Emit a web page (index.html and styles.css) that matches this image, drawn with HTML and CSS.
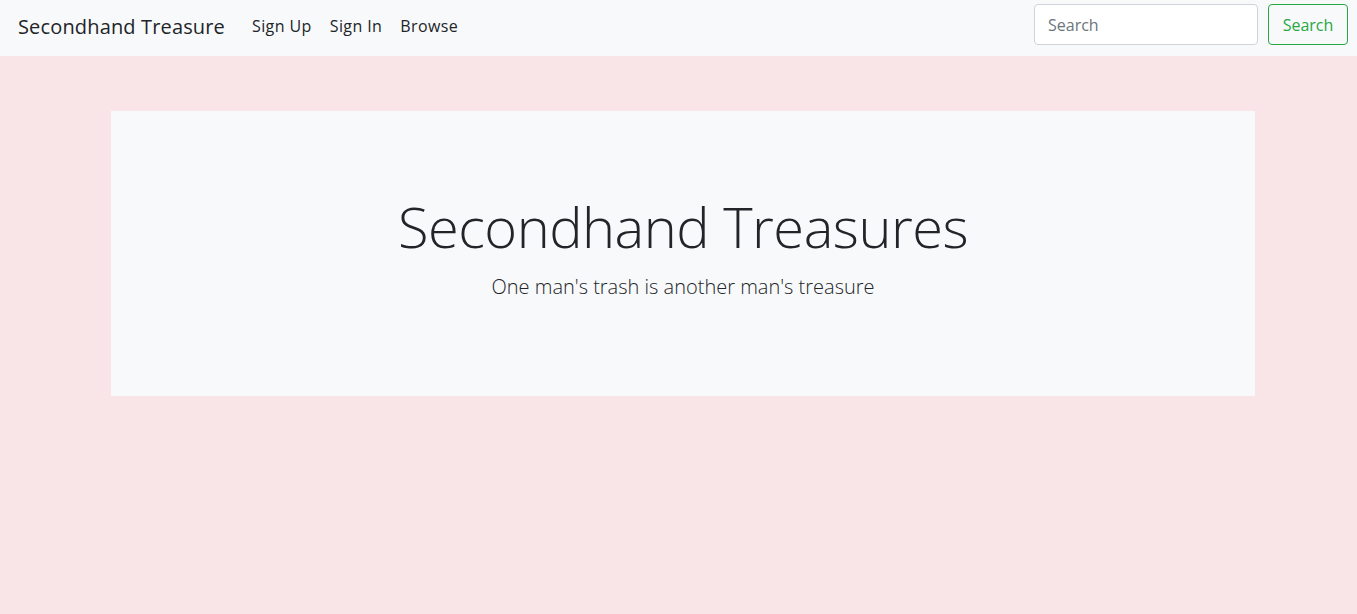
FILE: index.html
```html
<!DOCTYPE html>
<html lang="en">
<head>
<meta charset="utf-8">
<title>Secondhand Treasure</title>
<link rel="stylesheet" href="styles.css">
</head>
<body>
<nav class="navbar">
  <a class="brand" href="#">Secondhand Treasure</a>
  <ul class="nav-links">
    <li><a href="#">Sign Up</a></li>
    <li><a href="#">Sign In</a></li>
    <li><a href="#">Browse</a></li>
  </ul>
  <form class="search-form">
    <input class="search-input" type="search" placeholder="Search">
    <button class="search-btn" type="button">Search</button>
  </form>
</nav>
<main class="page">
  <section class="jumbotron">
    <h1 class="display">Secondhand Treasures</h1>
    <p class="lead">One man's trash is another man's treasure</p>
  </section>
</main>
</body>
</html>
```
FILE: styles.css
```css
* { box-sizing: border-box; }
html, body { margin: 0; height: 100%; }
body {
  font-family: "Open Sans", "Noto Sans", sans-serif;
  color: #212529;
  background: #f9e4e8;
}
.navbar {
  height: 56px;
  background: #f8f9fa;
  display: flex;
  align-items: center;
  padding: 0 9px 0 18px;
}
.brand {
  font-size: 20px;
  color: #212529;
  text-decoration: none;
  margin-right: 27px;
  letter-spacing: 0.15px;
  margin-top: -4px;
}
.nav-links {
  list-style: none;
  margin: -4px 0 0;
  padding: 0;
  display: flex;
  gap: 18px;
  flex: 1;
}
.nav-links a {
  font-size: 16px;
  color: #212529;
  text-decoration: none;
  letter-spacing: 0.4px;
}
.search-form {
  display: flex;
  gap: 10px;
  align-self: flex-start;
  margin-top: 4px;
}
.search-input {
  width: 224px;
  height: 41px;
  border: 1px solid #ced4da;
  border-radius: 4px;
  padding: 0 13px;
  font-family: inherit;
  font-size: 16px;
  color: #495057;
  background: #fff;
}
.search-input::placeholder { color: #6c757d; }
.search-btn {
  height: 41px;
  width: 80px;
  border: 1px solid #28a745;
  border-radius: 4px;
  background: transparent;
  color: #28a745;
  font-family: inherit;
  font-size: 16px;
  padding: 0;
}
.page {
  padding: 55px 102px 0 111px;
}
.jumbotron {
  background: #f8f9fa;
  height: 285px;
  padding-top: 82px;
  text-align: center;
}
.display {
  margin: 0;
  font-size: 56px;
  font-weight: 300;
  line-height: 67px;
  letter-spacing: -0.5px;
}
.lead {
  margin: 12px 0 0;
  font-size: 20px;
  font-weight: 300;
  line-height: 30px;
}
```
